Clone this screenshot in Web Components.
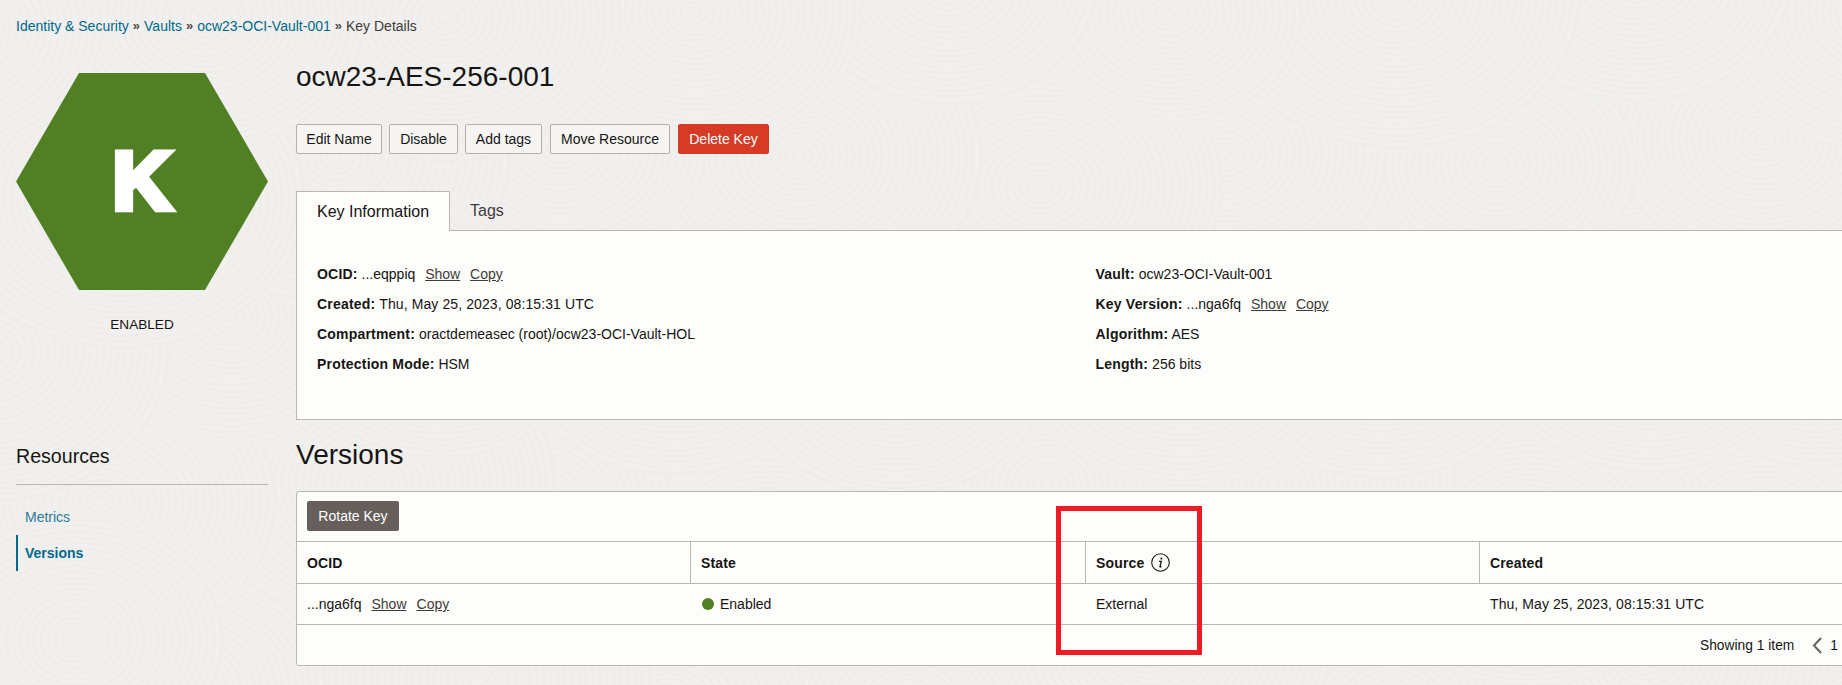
<!DOCTYPE html>
<html>
<head>
<meta charset="utf-8">
<title>Key Details</title>
<style>
  html, body { margin: 0; padding: 0; height: 100%; overflow: hidden; background: #f1f0ee; }
  body { font-family: "Liberation Sans", Arial, sans-serif; font-size: 14px; color: #161513; }
</style>
</head>
<body>
<key-page>
  <bread-crumbs slot="crumbs"></bread-crumbs>
  <key-side slot="side"></key-side>
  <key-head slot="main"></key-head>
  <key-tabs slot="main"></key-tabs>
  <versions-card slot="main"></versions-card>
  <red-frame slot="marks"></red-frame>
</key-page>

<script>
// faint swirl texture of the console background, as stacked radial gradients
function swirlLayers() {
  const base = "#f1f0ee", line = "#eeedeb";
  const spots = [[75, 640, 150]];
  let seed = 7;
  const rnd = () => (seed = (seed * 16807) % 2147483647) / 2147483647;
  for (let y = 0; y < 780; y += 170) {
    for (let x = (y / 170) % 2 ? 115 : 0; x < 1950; x += 230) {
      spots.push([x + rnd() * 90 - 45, y + rnd() * 70 - 35, 130 + rnd() * 60]);
    }
  }
  return spots.map(([x, y, r]) => {
    const step = 7;
    const stops = [];
    for (let d = 0; d + step <= r; d += step) {
      stops.push(`${base} ${d}px`, `${base} ${d + 5}px`, `${line} ${d + 5}px`, `${line} ${d + step}px`);
    }
    stops.push(`transparent ${r}px`);
    const ry = Math.round(r * 0.82);
    return `radial-gradient(ellipse ${Math.round(r)}px ${ry}px at ${x.toFixed(0)}px ${y.toFixed(0)}px, ${stops.join(",")})`;
  }).join(",");
}

class KeyPage extends HTMLElement {
  constructor() {
    super();
    this.attachShadow({ mode: "open" }).innerHTML = `
    <style>
      :host {
        display: block;
        position: relative;
        width: 1876px;
        height: 685px;
        overflow: hidden;
        box-sizing: border-box;
        padding: 16px 0 0 16px;
        background-color: #f1f0ee;
        background-image: ${swirlLayers()};
      }
      .cols { display: flex; gap: 28px; }
      .main { display: block; width: 1580px; }
    </style>
    <slot name="crumbs"></slot>
    <div class="cols">
      <slot name="side"></slot>
      <div class="main"><slot name="main"></slot></div>
    </div>
    <slot name="marks"></slot>`;
  }
}

class BreadCrumbs extends HTMLElement {
  constructor() {
    super();
    this.attachShadow({ mode: "open" }).innerHTML = `
    <style>
      :host { display: flex; height: 20px; line-height: 20px; font-size: 14px; color: #3f3b38; }
      a { color: #00688c; text-decoration: none; }
      i { font-style: normal; font-weight: 700; font-size: 13px; margin: 0 4px 0 4px; color: #4f4a47; }
    </style>
    <a>Identity &amp; Security</a><i>»</i><a>Vaults</a><i>»</i><a>ocw23-OCI-Vault-001</a><i>»</i><span>Key Details</span>`;
  }
}

class KeySide extends HTMLElement {
  constructor() {
    super();
    this.attachShadow({ mode: "open" }).innerHTML = `
    <style>
      :host { display: block; width: 252px; flex: none; padding-top: 37px; }
      .hex {
        height: 217px;
        background: #508023;
        clip-path: polygon(25% 0, 75% 0, 100% 50%, 75% 100%, 25% 100%, 0 50%);
        display: flex;
        align-items: center;
        justify-content: center;
        color: #fff;
        font: bold 81px/1 "Liberation Sans", Arial, sans-serif;
        -webkit-text-stroke: 6.5px #fff;
        paint-order: stroke fill;
      }
      .state { margin-top: 25px; line-height: 20px; text-align: center; font-size: 13.6px; }
      h3 {
        margin: 107px 0 0;
        padding-bottom: 14px;
        font-size: 19.6px;
        font-weight: 400;
        line-height: 28px;
        border-bottom: 1px solid #bcb6b1;
      }
      ul { list-style: none; margin: 14px 0 0; padding: 0; }
      li { height: 36px; line-height: 36px; padding-left: 7px; border-left: 2px solid transparent; color: #2b7a99; }
      li.on { border-left-color: #00688c; color: #00688c; font-weight: 700; }
    </style>
    <div class="hex">K</div>
    <div class="state">ENABLED</div>
    <h3>Resources</h3>
    <ul><li>Metrics</li><li class="on">Versions</li></ul>`;
  }
}

class KeyHead extends HTMLElement {
  constructor() {
    super();
    this.attachShadow({ mode: "open" }).innerHTML = `
    <style>
      :host { display: block; padding-top: 23px; }
      h1 { margin: 0; font-size: 28px; line-height: 36px; font-weight: 400; }
      .btns { display: flex; gap: 7px; margin-top: 29px; }
      button {
        height: 30px;
        padding: 0;
        box-sizing: border-box;
        border: 1px solid #b5b0ab;
        border-radius: 2px;
        background: #f6f5f3;
        color: #161513;
        font: 14px "Liberation Sans", Arial, sans-serif;
      }
      button.danger { background: #d63b25; border-color: #d63b25; color: #fff; margin-left: 1px; }
    </style>
    <h1>ocw23-AES-256-001</h1>
    <div class="btns">
      <button style="width:86px">Edit Name</button><button style="width:69px">Disable</button><button style="width:77px">Add tags</button><button style="width:120px;margin-left:1px">Move Resource</button><button class="danger" style="width:91px">Delete Key</button>
    </div>`;
  }
}

class InfoRow extends HTMLElement {
  constructor() {
    super();
    this.attachShadow({ mode: "open" }).innerHTML = `
    <style>
      :host { display: block; height: 30px; line-height: 30px; font-size: 14px; }
      b { font-weight: 700; letter-spacing: .2px; }
      ::slotted(a) { color: #3f3b38; text-decoration: underline; margin-left: 6px; }
    </style>
    <b></b> <slot></slot>`;
    this.shadowRoot.querySelector("b").textContent = this.getAttribute("label") + ":";
  }
}

class KeyTabs extends HTMLElement {
  constructor() {
    super();
    this.attachShadow({ mode: "open" }).innerHTML = `
    <style>
      :host { display: block; margin-top: 37px; }
      .bar { display: flex; height: 39px; font-size: 16px; }
      .tab { padding: 0 20px; line-height: 40px; }
      .tab.on {
        background: #fdfdfb;
        border: 1px solid #bcb6b1;
        border-bottom: none;
        height: 40px;
        box-sizing: border-box;
        position: relative;
        z-index: 1;
      }
      .tab.off { color: #3f3b38; padding-left: 20px; line-height: 40px; }
      .panel {
        background: #fdfdfb;
        border: 1px solid #bcb6b1;
        height: 190px;
        box-sizing: border-box;
        padding: 28px 20px 0;
        display: grid;
        grid-template-columns: 1fr 1fr;
        column-gap: 19px;
        align-content: start;
      }
      h2 { margin: 17px 0 0; font-size: 28px; line-height: 36px; font-weight: 400; }
    </style>
    <div class="bar"><div class="tab on">Key Information</div><div class="tab off">Tags</div></div>
    <div class="panel">
      <div>
        <info-row label="OCID">...eqppiq <a>Show</a> <a>Copy</a></info-row>
        <info-row label="Created"><span style="letter-spacing:.1px">Thu, May 25, 2023, 08:15:31 UTC</span></info-row>
        <info-row label="Compartment">oractdemeasec (root)/ocw23-OCI-Vault-HOL</info-row>
        <info-row label="Protection Mode">HSM</info-row>
      </div>
      <div>
        <info-row label="Vault">ocw23-OCI-Vault-001</info-row>
        <info-row label="Key Version">...nga6fq <a>Show</a> <a>Copy</a></info-row>
        <info-row label="Algorithm">AES</info-row>
        <info-row label="Length">256 bits</info-row>
      </div>
    </div>
    <h2>Versions</h2>`;
  }
}

class VersionsCard extends HTMLElement {
  constructor() {
    super();
    this.attachShadow({ mode: "open" }).innerHTML = `
    <style>
      :host {
        display: block;
        margin-top: 18px;
        height: 175px;
        box-sizing: border-box;
        background: #fdfdfb;
        border: 1px solid #bcb6b1;
        border-radius: 3px;
        font-size: 14px;
      }
      .tools { height: 49px; box-sizing: border-box; padding: 9px 10px 0; }
      .tools button {
        height: 30px;
        width: 92px;
        padding: 0;
        border: none;
        border-radius: 2px;
        background: #665f5b;
        color: #fff;
        font: 14px "Liberation Sans", Arial, sans-serif;
      }
      .row {
        display: grid;
        grid-template-columns: 394px 395px 394px 395px;
        border-top: 1px solid #bcb6b1;
        box-sizing: border-box;
      }
      .head { height: 42px; font-weight: 700; letter-spacing: .15px; }
      .body { height: 41px; }
      .cell { padding: 0 10px; display: flex; align-items: center; white-space: pre; }
      .head .cell { border-right: 1px solid #bcb6b1; }
      .head .cell:last-child { border-right: none; }
      .dot { width: 12px; height: 12px; border-radius: 50%; background: #508023; margin: 0 6px 0 1px; }
      .cell a { color: #3f3b38; text-decoration: underline; margin-left: 10px; }
      .cell svg { margin-left: 7px; }
      .foot {
        height: 41px;
        box-sizing: border-box;
        border-top: 1px solid #bcb6b1;
        display: flex;
        align-items: center;
        justify-content: flex-end;
        padding-right: 37px;
        font-size: 13.8px;
      }
      .foot svg { margin: 0 8px 0 18px; }
    </style>
    <div class="tools"><button>Rotate Key</button></div>
    <div class="row head">
      <div class="cell">OCID</div>
      <div class="cell">State</div>
      <div class="cell">Source<svg width="19" height="19" viewBox="0 0 19 19"><circle cx="9.5" cy="9.5" r="8.8" fill="none" stroke="#161513" stroke-width="1.1"/><circle cx="10.4" cy="5.6" r="1.05" fill="#161513"/><path d="M8 8.4h2.3l-1.3 5q-.2.8.5.6l1-.6" fill="none" stroke="#161513" stroke-width="1.3"/></svg></div>
      <div class="cell">Created</div>
    </div>
    <div class="row body">
      <div class="cell">...nga6fq<a>Show</a><a>Copy</a></div>
      <div class="cell"><span class="dot"></span>Enabled</div>
      <div class="cell">External</div>
      <div class="cell" style="letter-spacing:.08px">Thu, May 25, 2023, 08:15:31 UTC</div>
    </div>
    <div class="foot">Showing 1 item<svg width="10" height="17" viewBox="0 0 10 17"><path d="M9 1 2 8.5 9 16" fill="none" stroke="#665f5b" stroke-width="2"/></svg>1</div>`;
  }
}

// the red box someone drew over the screenshot, sits on top of the table
class RedFrame extends HTMLElement {
  constructor() {
    super();
    this.attachShadow({ mode: "open" }).innerHTML = `
    <style>
      :host {
        position: absolute;
        left: 1056px;
        top: 506px;
        width: 146px;
        height: 149px;
        box-sizing: border-box;
        border: 5px solid #ed1c24;
      }
    </style>`;
  }
}

customElements.define("info-row", InfoRow);
customElements.define("bread-crumbs", BreadCrumbs);
customElements.define("key-side", KeySide);
customElements.define("key-head", KeyHead);
customElements.define("key-tabs", KeyTabs);
customElements.define("versions-card", VersionsCard);
customElements.define("red-frame", RedFrame);
customElements.define("key-page", KeyPage);
</script>
</body>
</html>
